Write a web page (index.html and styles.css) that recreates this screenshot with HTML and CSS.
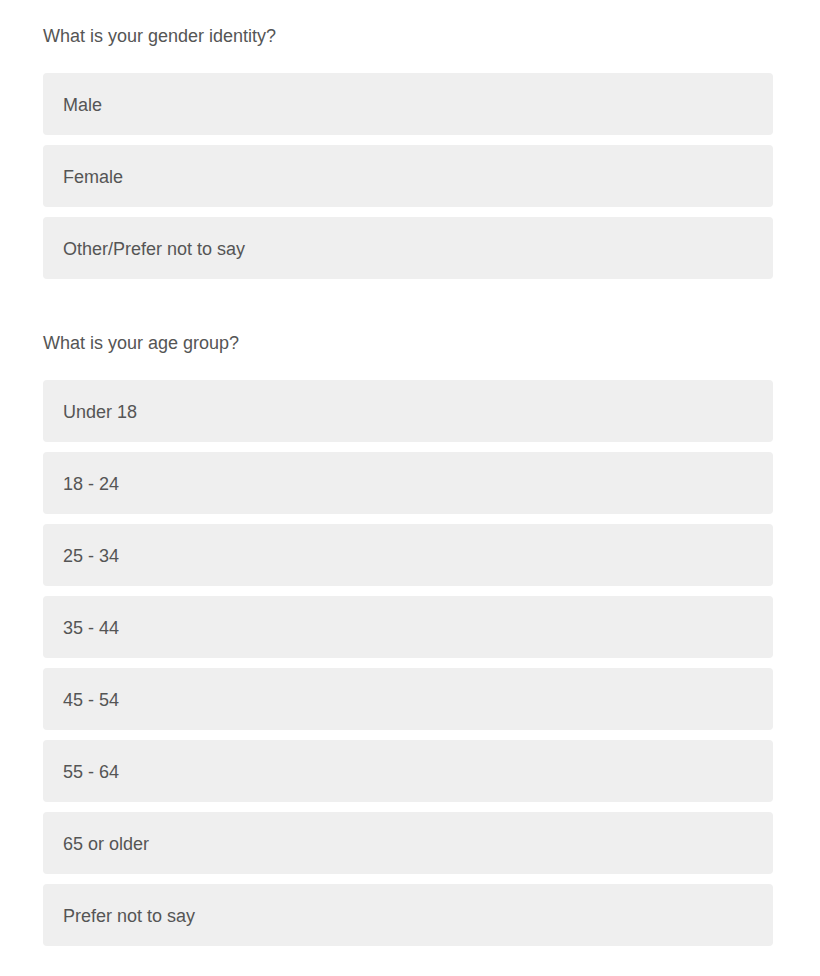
FILE: index.html
```html
<!DOCTYPE html>
<html lang="en">
<head>
<meta charset="utf-8">
<title>Survey</title>
<link rel="stylesheet" href="styles.css">
</head>
<body>
<main class="survey">
  <section class="question">
    <p class="question-title">What is your gender identity?</p>
    <div class="options">
      <div class="option">Male</div>
      <div class="option">Female</div>
      <div class="option">Other/Prefer not to say</div>
    </div>
  </section>
  <section class="question">
    <p class="question-title">What is your age group?</p>
    <div class="options">
      <div class="option">Under 18</div>
      <div class="option">18 - 24</div>
      <div class="option">25 - 34</div>
      <div class="option">35 - 44</div>
      <div class="option">45 - 54</div>
      <div class="option">55 - 64</div>
      <div class="option">65 or older</div>
      <div class="option">Prefer not to say</div>
    </div>
  </section>
</main>
</body>
</html>
```

FILE: styles.css
```css
html, body {
  margin: 0;
  padding: 0;
  background: #ffffff;
}

body {
  font-family: "Liberation Sans", Arial, Helvetica, sans-serif;
  color: #555555;
}

.survey {
  width: 730px;
  padding: 24px 0 0 43px;
  display: flex;
  flex-direction: column;
  gap: 52px;
}

.question-title {
  margin: 0 0 25px 0;
  font-size: 18px;
  line-height: 24px;
  color: #555555;
}

.options {
  display: flex;
  flex-direction: column;
  gap: 10px;
}

.option {
  height: 62px;
  box-sizing: border-box;
  padding: 2px 20px 0 20px;
  display: flex;
  align-items: center;
  background: #efefef;
  border-radius: 4px;
  font-size: 18px;
  color: #555555;
}
```
